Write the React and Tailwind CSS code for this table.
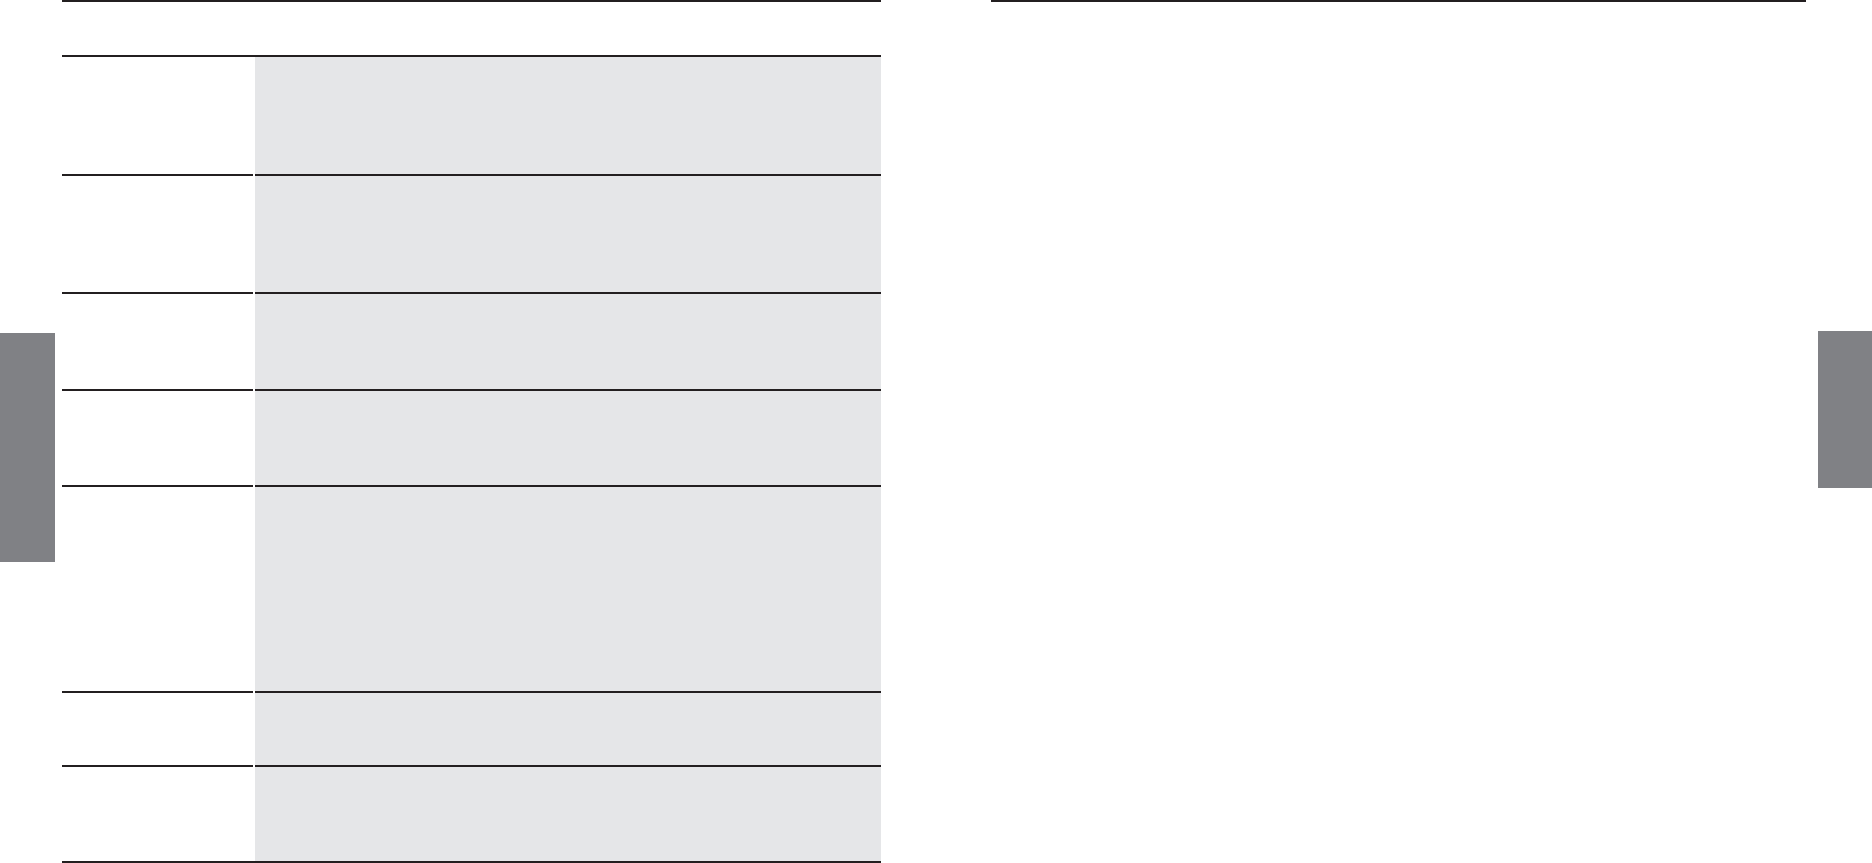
const rows = [
  { h: "h-[117px]", first: true },
  { h: "h-[118px]" },
  { h: "h-[97px]" },
  { h: "h-[96px]" },
  { h: "h-[206px]" },
  { h: "h-[74px]" },
  { h: "h-[96px]" },
];

function Row({ h, first }) {
  const line = first ? "" : "border-t-2 border-[#231f20]";
  return (
    <div className={`flex gap-[2px] ${h}`}>
      <div className={`w-[191px] ${line}`} />
      <div className={`flex-1 bg-[#e5e6e8] ${line}`} />
    </div>
  );
}

export default function App() {
  return (
    <div className="w-[1872px] h-[863px] overflow-hidden bg-white flex" style={{ fontFamily: "'Liberation Sans', sans-serif" }}>
      {/* left page edge tab */}
      <div className="w-[55px] shrink-0">
        <div className="mt-[333px] h-[229px] bg-[#808185]" />
      </div>

      {/* left page: table */}
      <div className="ml-[7px] w-[819px] shrink-0 flex flex-col">
        <div className="h-[2px] bg-[#231f20]" />
        <div className="h-[53px]" />
        <div className="h-[2px] bg-[#231f20]" />
        {rows.map((r, i) => (
          <Row key={i} {...r} />
        ))}
        <div className="h-[2px] bg-[#231f20]" />
      </div>

      {/* right page */}
      <div className="ml-[110px] w-[815px] shrink-0 flex flex-col">
        <div className="h-[2px] bg-[#231f20]" />
      </div>

      {/* right page edge tab */}
      <div className="ml-[12px] flex-1">
        <div className="mt-[331px] h-[157px] bg-[#808185]" />
      </div>
    </div>
  );
}
